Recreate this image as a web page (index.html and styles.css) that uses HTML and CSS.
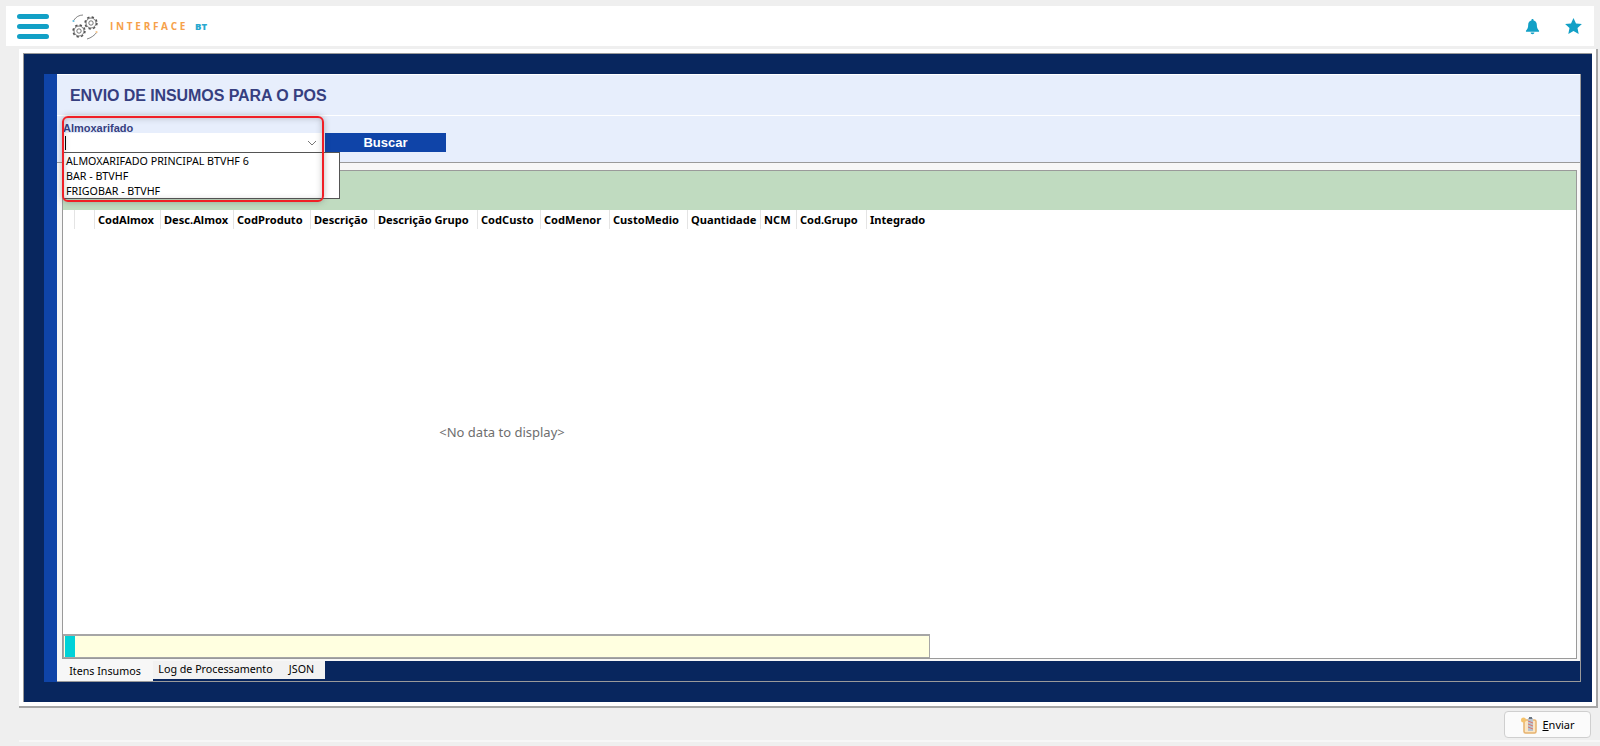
FILE: index.html
```html
<!DOCTYPE html>
<html lang="pt-BR">
<head>
    <meta charset="UTF-8">
    <meta name="viewport" content="width=device-width, initial-scale=1.0">
    <title>Interface BT</title>
    <link rel="stylesheet" href="styles.css">
</head>
<body>
    <header class="topbar">
        <div class="menu-btn"><span></span><span></span><span></span></div>
        <div class="logo">
            <svg class="logo-gears" width="28" height="28" viewBox="0 0 28 28">
                <circle class="gear-teeth" cx="20" cy="11" r="5.900"/>
                <circle class="gear-ring" cx="20" cy="11" r="5"/>
                <circle class="gear-hole" cx="20" cy="11" r="2.200"/>
                <circle class="gear-teeth" cx="8" cy="19" r="5.900"/>
                <circle class="gear-ring" cx="8" cy="19" r="5"/>
                <circle class="gear-hole" cx="8" cy="19" r="2.200"/>
                <path class="gear-arc" d="M3 8 C5 5 8 3 12 3"/>
                <path class="gear-arc" d="M16 27 C20 26 24 23 26 20"/>
                <circle cx="2.500" cy="9" r="1.100" fill="#5fb6d8"/>
                <circle cx="25.500" cy="20" r="1.100" fill="#f6c58b"/>
            </svg>
            <span class="logo-name">INTERFACE</span>
            <span class="logo-bt">BT</span>
        </div>
        <div class="top-icons">
            <svg width="15" height="17" viewBox="0 0 16 17"><path d="M8 0.5c.7 0 1.2.5 1.2 1.2v.5c2.200.5 3.400 2.300 3.400 4.500 0 3.300.8 4.800 2.400 6.400v1H1v-1c1.600-1.600 2.400-3.100 2.400-6.400 0-2.200 1.200-4 3.400-4.500v-.5C6.800 1 7.300.5 8 .5zM6 15h4c0 1-.9 1.700-2 1.700S6 16 6 15z"/></svg>
            <svg width="17" height="16" viewBox="0 0 17 16"><path d="M8.500 0l2.500 5.400 5.900.7-4.400 4 1.200 5.900-5.200-3-5.200 3 1.200-5.900L.1 6.100 6 5.400z"/></svg>
        </div>
    </header>

    <main class="window">
        <div class="frame">
            <div class="side-strip"></div>
            <div class="content">
                <div class="title-row"><h1>ENVIO DE INSUMOS PARA O POS</h1></div>
                <div class="filter-row">
                    <div class="field">
                        <label>Almoxarifado</label>
                        <div class="combo"><i class="caret"></i>
                            <svg class="chevron" width="10" height="6" viewBox="0 0 10 6"><path d="M1 1l4 4 4-4"/></svg>
                        </div>
                    </div>
                    <button class="search-btn">Buscar</button>
                    <ul class="dropdown">
                        <li>ALMOXARIFADO PRINCIPAL BTVHF 6</li>
                        <li>BAR - BTVHF</li>
                        <li>FRIGOBAR - BTVHF</li>
                    </ul>
                    <div class="highlight"></div>
                </div>
                <div class="grid-wrap">
                    <div class="grid">
                        <div class="group-band"></div>
                        <div class="grid-head">
                            <span class="w12"></span>
                            <span class="w20"></span>
                            <span class="w66">CodAlmox</span>
                            <span class="w73">Desc.Almox</span>
                            <span class="w77">CodProduto</span>
                            <span class="w64">Descrição</span>
                            <span class="w103">Descrição Grupo</span>
                            <span class="w63">CodCusto</span>
                            <span class="w69">CodMenor</span>
                            <span class="w78">CustoMedio</span>
                            <span class="w73">Quantidade</span>
                            <span class="w36">NCM</span>
                            <span class="w70">Cod.Grupo</span>
                            <span class="w70 last">Integrado</span>
                        </div>
                        <div class="grid-empty">&lt;No data to display&gt;</div>
                        <div class="grid-foot">
                            <div class="progress"><div class="progress-fill"></div></div>
                        </div>
                    </div>
                </div>
                <div class="tabs">
                    <div class="tab active">Itens Insumos</div>
                    <div class="tab log">Log de Processamento</div>
                    <div class="tab json">JSON</div>
                </div>
            </div>
        </div>
    </main>

    <footer class="actions">
        <button class="send-btn">
            <svg width="18" height="18" viewBox="0 0 18 18">
                <rect x="4" y="4" width="12" height="13" rx="1.500" fill="#fbe6c4" stroke="#e6b26e" stroke-width="1.500"/>
                <rect x="8" y="2" width="5" height="13" fill="#b9c4d0"/>
                <path d="M8 5l5 2M8 8l5 2M8 11l5 2" stroke="#d9756a" stroke-width="1"/>
                <rect x="9" y="1" width="3" height="2" fill="#6a7480"/>
                <circle cx="3.500" cy="4" r="2.500" fill="#f5c26b"/>
            </svg>
            <span><u>E</u>nviar</span>
        </button>
    </footer>
</body>
</html>
```

FILE: styles.css
```css
* {
    margin: 0;
    padding: 0;
    box-sizing: border-box;
}

html, body {
    height: 746px;
    overflow: hidden;
}

body {
    background-color: #efefef;
    font-family: 'Noto Sans', sans-serif;
    color: #000;
    display: flex;
    flex-direction: column;
}

/* Top bar */
.topbar {
    height: 40px;
    margin: 6px 6px 0;
    background-color: #fff;
    display: flex;
    align-items: center;
    padding: 0 12px 0 11px;
}

.menu-btn {
    width: 32px;
    display: flex;
    flex-direction: column;
    gap: 5px;
}

.menu-btn span {
    height: 5px;
    border-radius: 3px;
    background-color: #12a0c6;
}

.logo {
    display: flex;
    align-items: center;
    margin-left: 22px;
}

.logo-gears {
    margin-right: 11px;
}

.gear-teeth {
    fill: none;
    stroke: #555;
    stroke-width: 1.600;
    stroke-dasharray: 2.300 2.330;
}

.gear-ring, .gear-hole {
    fill: #fff;
    stroke: #555;
    stroke-width: 0.8;
}

.gear-arc {
    fill: none;
    stroke: #666;
    stroke-width: 0.8;
}

.logo-name {
    font-family: 'Open Sans', sans-serif;
    font-size: 10px;
    font-weight: 700;
    letter-spacing: 2.700px;
    color: #f6a14a;
}

.logo-bt {
    font-family: 'Open Sans', sans-serif;
    font-size: 9.500px;
    font-weight: 800;
    color: #2aa8cf;
    margin-left: 7px;
}

.top-icons {
    margin-left: auto;
    display: flex;
    align-items: center;
    gap: 25px;
}

.top-icons svg {
    fill: #12a0c6;
}

/* Main window */
.window {
    height: 659px;
    margin: 3px 2px 0 19px;
    padding: 4px;
    background-color: #fff;
    border-right: 2px solid #a6a6a6;
    border-bottom: 2px solid #a6a6a6;
}

.frame {
    height: 649px;
    background-color: #08265e;
    border-left: 1px solid #9a9a9a;
    border-top: 1px solid #9a9a9a;
    padding: 20px 11px 20px 20px;
    display: flex;
}

.side-strip {
    width: 13px;
    background-color: #0f44a8;
}

.content {
    flex: 1;
    min-width: 0;
    display: flex;
    flex-direction: column;
    border-right: 1px solid #9a9a9a;
    border-bottom: 1px solid #9a9a9a;
    position: relative;
}

.title-row {
    height: 42px;
    background-color: #e7eefc;
    border-top: 1px solid #fff;
    border-bottom: 1px solid #fff;
    display: flex;
    align-items: center;
    padding: 1px 0 0 13px;
}

.title-row h1 {
    font-family: 'Liberation Sans', Arial, sans-serif;
    font-size: 16px;
    font-weight: bold;
    letter-spacing: -0.08px;
    color: #363f80;
}

.filter-row {
    height: 47px;
    background-color: #e7eefc;
    border-bottom: 1px solid #9a9a9a;
    padding: 7px 0 0 7px;
    display: flex;
    align-items: flex-end;
    position: relative;
}

.field {
    width: 259px;
    margin-bottom: 10px;
}

.field label {
    display: block;
    margin-left: -1px;
    margin-bottom: -1px;
    font-family: 'Liberation Sans', Arial, sans-serif;
    font-size: 11px;
    font-weight: bold;
    line-height: 11px;
    color: #363f80;
}

.combo {
    position: relative;
    height: 19px;
    background-color: #fff;
    display: flex;
    align-items: center;
    justify-content: space-between;
    padding-right: 6px;
}

.caret {
    width: 1px;
    height: 14px;
    margin-left: 1px;
    background-color: #000;
}

.chevron {
    fill: none;
    stroke: #777;
    stroke-width: 1;
}

.search-btn {
    width: 121px;
    height: 19px;
    margin: 0 0 10px 2px;
    border: 0;
    background-color: #0f44a8;
    color: #fff;
    font-family: 'Liberation Sans', Arial, sans-serif;
    font-size: 13px;
    font-weight: bold;
}

/* Open dropdown and the red marker over it */
.dropdown {
    position: absolute;
    left: 6px;
    top: 36px;
    width: 277px;
    height: 47px;
    list-style: none;
    background-color: #fff;
    border: 1px solid #555;
    padding: 1px 0 0 2px;
    z-index: 5;
}

.dropdown li {
    font-family: 'Noto Sans', sans-serif;
    font-size: 10.700px;
    line-height: 15px;
}

.highlight {
    position: absolute;
    left: 5px;
    top: 0;
    width: 262px;
    height: 86px;
    border: 2px solid #f01f26;
    border-radius: 6px;
    box-shadow: 0 0 6px rgba(60, 60, 60, 0.35), inset 0 0 6px rgba(60, 60, 60, 0.3);
    z-index: 6;
}

/* Grid */
.grid-wrap {
    flex: 1;
    min-height: 0;
    background-color: #f7f7f7;
    padding: 7px 3px 2px 5px;
}

.grid {
    height: 100%;
    display: flex;
    flex-direction: column;
    background-color: #fff;
    border: 1px solid #9a9a9a;
}

.group-band {
    height: 39px;
    background-color: #c0dbc0;
}

.grid-head {
    height: 19px;
    display: flex;
    font-size: 11.100px;
    font-weight: 700;
    line-height: 19px;
}

.grid-head span {
    flex: none;
    padding-left: 3px;
    border-right: 1px solid #e4e4e4;
    white-space: nowrap;
}

.grid-head .last { border-right: 0; }
.w12 { width: 12px; }
.w20 { width: 20px; }
.w36 { width: 36px; }
.w63 { width: 63px; }
.w64 { width: 64px; }
.w66 { width: 66px; }
.w69 { width: 69px; }
.w70 { width: 70px; }
.w73 { width: 73px; }
.w77 { width: 77px; }
.w78 { width: 78px; }
.w103 { width: 103px; }

.grid-empty {
    flex: 1;
    display: flex;
    align-items: center;
    justify-content: center;
    width: 878px;
    font-size: 13px;
    color: #6e6e6e;
}

.grid-foot {
    height: 24px;
}

.progress {
    width: 867px;
    height: 24px;
    background-color: #ffffe0;
    border: 1px solid #a6a6a6;
    border-top-width: 2px;
    padding-left: 1px;
}

.progress-fill {
    width: 10px;
    height: 100%;
    background-color: #00d2d8;
}

/* Tabs */
.tabs {
    height: 20px;
    display: flex;
    align-items: flex-start;
    background-color: #08265e;
    font-size: 10.700px;
}

.tab {
    background-color: #f2f2f2;
    text-align: center;
    white-space: nowrap;
}

.tab.active {
    width: 96px;
    height: 20px;
    line-height: 21px;
    background-color: #f7f7f7;
}

.tab.log {
    width: 125px;
    height: 18px;
    line-height: 17px;
}

.tab.json {
    width: 47px;
    height: 18px;
    line-height: 17px;
}

/* Footer */
.actions {
    height: 34px;
    margin-left: 19px;
    display: flex;
    justify-content: flex-end;
    padding: 3px 9px 0 0;
    border-bottom: 2px solid #f7f7f7;
}

.send-btn {
    width: 87px;
    height: 27px;
    background-color: #fbfbfb;
    border: 1px solid #cfcfcf;
    border-radius: 4px;
    display: flex;
    align-items: center;
    justify-content: center;
    gap: 4px;
    font-family: 'Noto Sans', sans-serif;
    font-size: 11px;
}
```
